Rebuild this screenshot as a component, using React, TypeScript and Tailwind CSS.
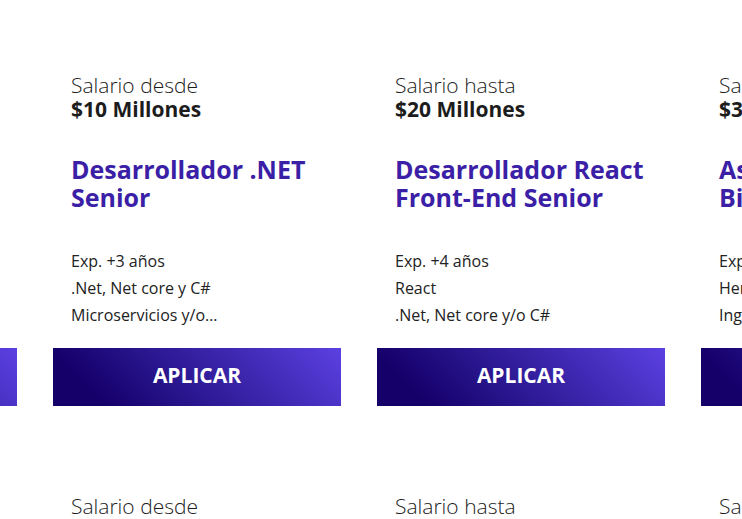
import React from 'react';

// ----------------------------------------------------------------------------
// Job offers carousel — cards with salary, title, requirements and apply CTA
// ----------------------------------------------------------------------------

interface Job {
  salaryLabel: string;
  salary: string;
  title: string[];
  reqs: string[];
}

const rowOne: Job[] = [
  {
    salaryLabel: 'Salario desde',
    salary: '$8 Millones',
    title: ['Desarrollador Java', 'Semi Senior'],
    reqs: ['Exp. +2 años', 'Java y Spring Boot', 'Bases de datos SQL'],
  },
  {
    salaryLabel: 'Salario desde',
    salary: '$10 Millones',
    title: ['Desarrollador .NET', 'Senior'],
    reqs: ['Exp. +3 años', '.Net, Net core y C#', 'Microservicios y/o…'],
  },
  {
    salaryLabel: 'Salario hasta',
    salary: '$20 Millones',
    title: ['Desarrollador React', 'Front-End Senior'],
    reqs: ['Exp. +4 años', 'React', '.Net, Net core y/o C#'],
  },
  {
    salaryLabel: 'Salario desde',
    salary: '$30 Millones',
    title: ['Asesor Senior', 'Big Data'],
    reqs: ['Exp. +5 años', 'Herramientas BI', 'Inglés avanzado'],
  },
];

const rowTwo: Job[] = [
  { salaryLabel: 'Salario desde', salary: '$9 Millones', title: ['Analista QA', 'Automatización'], reqs: ['Exp. +2 años', 'Selenium', 'Cypress'] },
  { salaryLabel: 'Salario desde', salary: '$12 Millones', title: ['Desarrollador Node', 'Senior'], reqs: ['Exp. +3 años', 'Node.js', 'AWS'] },
  { salaryLabel: 'Salario hasta', salary: '$18 Millones', title: ['Desarrollador Angular', 'Senior'], reqs: ['Exp. +4 años', 'Angular', 'TypeScript'] },
  { salaryLabel: 'Salario desde', salary: '$25 Millones', title: ['Arquitecto', 'Cloud'], reqs: ['Exp. +6 años', 'Azure', 'Kubernetes'] },
];

function JobCard({ job }: { job: Job }) {
  return (
    <div className="w-[288px] shrink-0 flex flex-col">
      <div className="px-[18px]">
        <p className="text-[21px] leading-[24px] font-light text-[#1c1c1c]">{job.salaryLabel}</p>
        <p className="text-[21px] leading-[24px] font-bold text-[#1c1c1c]">{job.salary}</p>
        <h3 className="mt-[34px] text-[25px] leading-[28px] font-bold text-[#3b1fa6]">
          {job.title.map((t) => (
            <span key={t} className="block whitespace-nowrap">{t}</span>
          ))}
        </h3>
        <ul className="mt-[37px] text-[16px] leading-[27px] text-[#222]">
          {job.reqs.map((r) => (
            <li key={r} className="whitespace-nowrap">{r}</li>
          ))}
        </ul>
      </div>
      <button className="mt-[19px] h-[58px] w-full pb-[2px] bg-linear-45 from-[#15006a] from-15% to-[#5c40e2] text-white text-[21px] font-bold">
        APLICAR
      </button>
    </div>
  );
}

export default function App() {
  return (
    <div className="w-[742px] h-[519px] overflow-hidden bg-white font-['Open_Sans',sans-serif]">
      <div className="pt-[73px] flex flex-col gap-[88px]">
        <div className="flex gap-9 ml-[-271px]">
          {rowOne.map((job) => (
            <JobCard key={job.title.join(' ')} job={job} />
          ))}
        </div>
        <div className="flex gap-9 ml-[-271px]">
          {rowTwo.map((job) => (
            <JobCard key={job.title.join(' ')} job={job} />
          ))}
        </div>
      </div>
    </div>
  );
}
